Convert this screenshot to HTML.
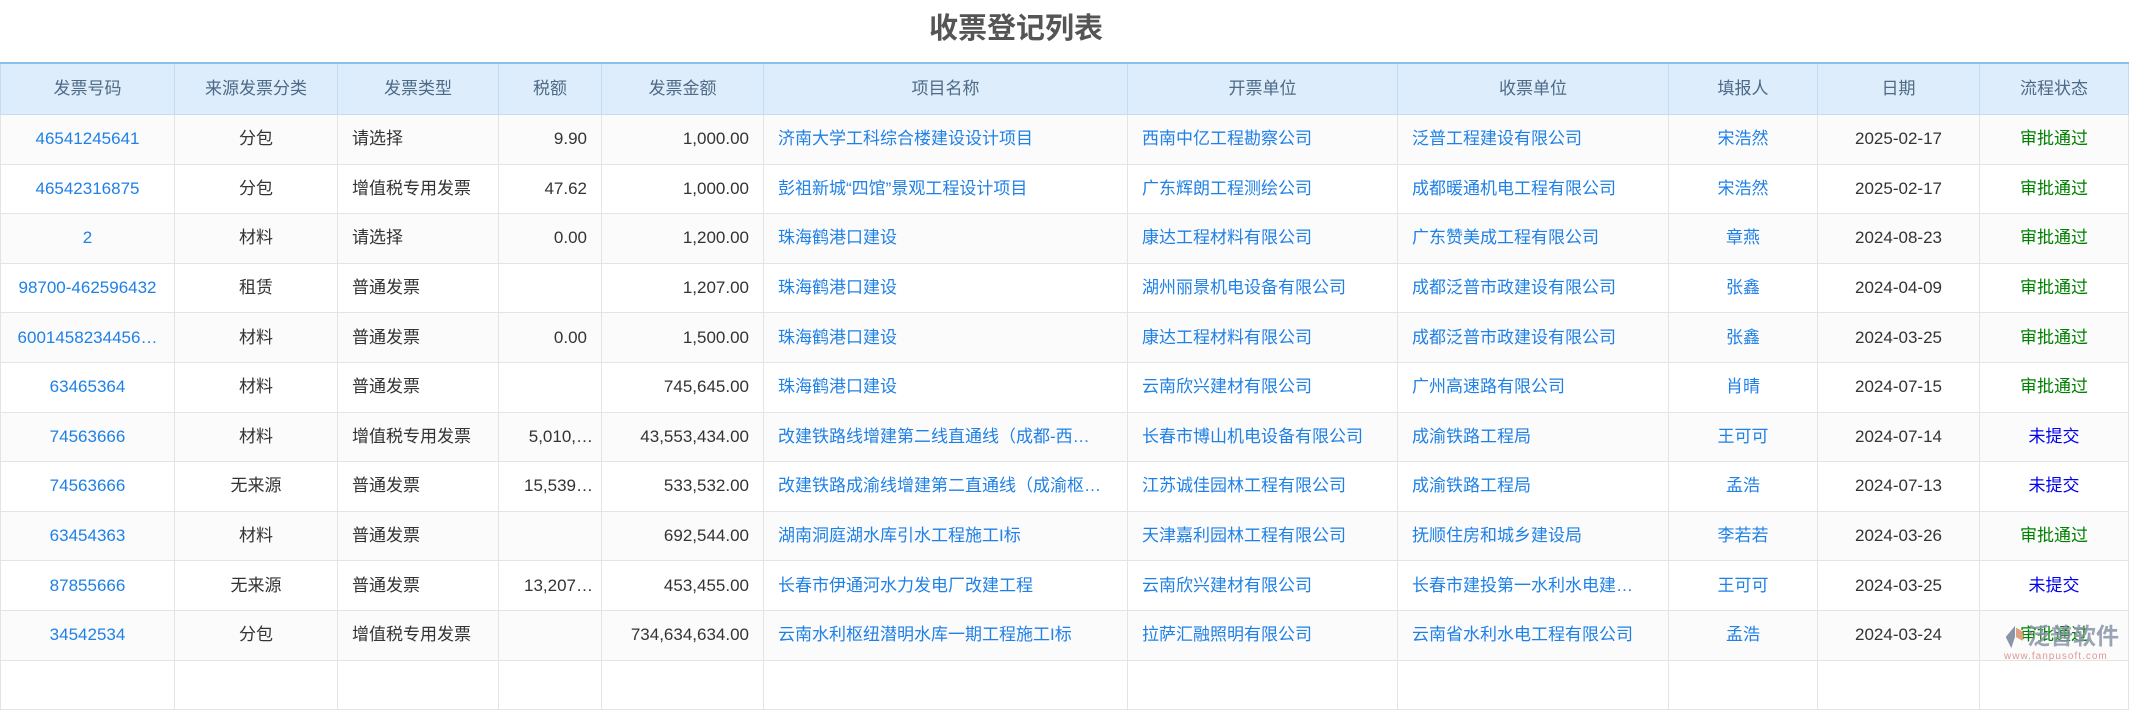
<!DOCTYPE html>
<html><head><meta charset="utf-8"><style>
html,body{margin:0;padding:0;background:#fff;width:2131px;height:669px;overflow:hidden;font-family:"Liberation Sans","Noto Sans CJK SC",sans-serif}
.title{position:absolute;left:0;top:10px;width:2032px;text-align:center;font-size:29px;font-weight:bold;color:#555;line-height:38px}
table{position:absolute;left:0;top:62px;border-collapse:collapse;table-layout:fixed;width:2128px}
th{height:48px;background:#deedfb;color:#4d6a86;font-weight:normal;font-size:17px;line-height:20px;border:1px solid #c5dbef;border-top:2px solid #8cc0ec}
td{height:48.6px;font-size:17px;line-height:20px;vertical-align:middle;border:1px solid #e4e4e4;color:#333;white-space:nowrap;overflow:hidden;text-overflow:ellipsis;padding:0 14px}
tr:nth-child(even) td{background:#fbfbfb}
.c{text-align:center}.r{text-align:right}.l{text-align:left}
.b{color:#1f80e6}.g{color:#008000}.u{color:#0000ee}
.wm{position:absolute;left:2027px;top:622px;font-size:23px;line-height:28px;font-weight:bold;color:#8a94a8;opacity:.85;white-space:nowrap}
.wm2{position:absolute;left:2004px;top:651px;font-size:10px;line-height:12px;color:#d99;letter-spacing:1px;white-space:nowrap}
</style></head><body>
<div class="title">收票登记列表</div>
<table>
<colgroup><col style="width:174px"><col style="width:163px"><col style="width:161px"><col style="width:103px"><col style="width:162px"><col style="width:364px"><col style="width:270px"><col style="width:271px"><col style="width:149px"><col style="width:162px"><col style="width:149px"></colgroup>
<tr><th>发票号码</th><th>来源发票分类</th><th>发票类型</th><th>税额</th><th>发票金额</th><th>项目名称</th><th>开票单位</th><th>收票单位</th><th>填报人</th><th>日期</th><th>流程状态</th></tr>
<tr><td class="c b">46541245641</td><td class="c">分包</td><td>请选择</td><td class="r">9.90</td><td class="r">1,000.00</td><td class="b">济南大学工科综合楼建设设计项目</td><td class="b">西南中亿工程勘察公司</td><td class="b">泛普工程建设有限公司</td><td class="c b">宋浩然</td><td class="c">2025-02-17</td><td class="c g">审批通过</td></tr>
<tr><td class="c b">46542316875</td><td class="c">分包</td><td>增值税专用发票</td><td class="r">47.62</td><td class="r">1,000.00</td><td class="b">彭祖新城“四馆”景观工程设计项目</td><td class="b">广东辉朗工程测绘公司</td><td class="b">成都暖通机电工程有限公司</td><td class="c b">宋浩然</td><td class="c">2025-02-17</td><td class="c g">审批通过</td></tr>
<tr><td class="c b">2</td><td class="c">材料</td><td>请选择</td><td class="r">0.00</td><td class="r">1,200.00</td><td class="b">珠海鹤港口建设</td><td class="b">康达工程材料有限公司</td><td class="b">广东赞美成工程有限公司</td><td class="c b">章燕</td><td class="c">2024-08-23</td><td class="c g">审批通过</td></tr>
<tr><td class="c b">98700-462596432</td><td class="c">租赁</td><td>普通发票</td><td class="r"></td><td class="r">1,207.00</td><td class="b">珠海鹤港口建设</td><td class="b">湖州丽景机电设备有限公司</td><td class="b">成都泛普市政建设有限公司</td><td class="c b">张鑫</td><td class="c">2024-04-09</td><td class="c g">审批通过</td></tr>
<tr><td class="c b" style="padding:0 4px">6001458234456…</td><td class="c">材料</td><td>普通发票</td><td class="r">0.00</td><td class="r">1,500.00</td><td class="b">珠海鹤港口建设</td><td class="b">康达工程材料有限公司</td><td class="b">成都泛普市政建设有限公司</td><td class="c b">张鑫</td><td class="c">2024-03-25</td><td class="c g">审批通过</td></tr>
<tr><td class="c b">63465364</td><td class="c">材料</td><td>普通发票</td><td class="r"></td><td class="r">745,645.00</td><td class="b">珠海鹤港口建设</td><td class="b">云南欣兴建材有限公司</td><td class="b">广州高速路有限公司</td><td class="c b">肖晴</td><td class="c">2024-07-15</td><td class="c g">审批通过</td></tr>
<tr><td class="c b">74563666</td><td class="c">材料</td><td>增值税专用发票</td><td class="r" style="padding:0 8px">5,010,…</td><td class="r">43,553,434.00</td><td class="b">改建铁路线增建第二线直通线（成都-西…</td><td class="b">长春市博山机电设备有限公司</td><td class="b">成渝铁路工程局</td><td class="c b">王可可</td><td class="c">2024-07-14</td><td class="c u">未提交</td></tr>
<tr><td class="c b">74563666</td><td class="c">无来源</td><td>普通发票</td><td class="r" style="padding:0 8px">15,539…</td><td class="r">533,532.00</td><td class="b">改建铁路成渝线增建第二直通线（成渝枢…</td><td class="b">江苏诚佳园林工程有限公司</td><td class="b">成渝铁路工程局</td><td class="c b">孟浩</td><td class="c">2024-07-13</td><td class="c u">未提交</td></tr>
<tr><td class="c b">63454363</td><td class="c">材料</td><td>普通发票</td><td class="r"></td><td class="r">692,544.00</td><td class="b">湖南洞庭湖水库引水工程施工I标</td><td class="b">天津嘉利园林工程有限公司</td><td class="b">抚顺住房和城乡建设局</td><td class="c b">李若若</td><td class="c">2024-03-26</td><td class="c g">审批通过</td></tr>
<tr><td class="c b">87855666</td><td class="c">无来源</td><td>普通发票</td><td class="r" style="padding:0 8px">13,207…</td><td class="r">453,455.00</td><td class="b">长春市伊通河水力发电厂改建工程</td><td class="b">云南欣兴建材有限公司</td><td class="b">长春市建投第一水利水电建…</td><td class="c b">王可可</td><td class="c">2024-03-25</td><td class="c u">未提交</td></tr>
<tr><td class="c b">34542534</td><td class="c">分包</td><td>增值税专用发票</td><td class="r"></td><td class="r">734,634,634.00</td><td class="b">云南水利枢纽潜明水库一期工程施工I标</td><td class="b">拉萨汇融照明有限公司</td><td class="b">云南省水利水电工程有限公司</td><td class="c b">孟浩</td><td class="c">2024-03-24</td><td class="c g">审批通过</td></tr>
<tr><td></td><td></td><td></td><td></td><td></td><td></td><td></td><td></td><td></td><td></td><td></td></tr>
</table>
<svg style="position:absolute;left:2002px;top:624px" width="26" height="26" viewBox="0 0 28 28"><path d="M14 2 L4 14 L10 26 L14 14 Z" fill="#8a94a8"/><path d="M15 4 Q26 8 22 18 L15 14 Z" fill="#e0a080"/></svg>
<div class="wm">泛普软件</div>
<div class="wm2">www.fanpusoft.com</div>
</body></html>
